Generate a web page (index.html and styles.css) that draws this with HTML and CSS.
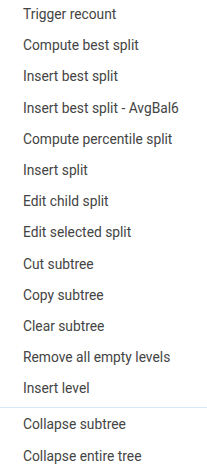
FILE: index.html
```html
<!DOCTYPE html>
<html lang="en">
<head>
  <meta charset="UTF-8">
  <title>tree menu</title>
  <link rel="stylesheet" href="styles.css">
</head>
<body>
  <ul class="menu">
    <li class="item">Trigger recount</li>
    <li class="item">Compute best split</li>
    <li class="item">Insert best split</li>
    <li class="item">Insert best split - AvgBal6</li>
    <li class="item">Compute percentile split</li>
    <li class="item">Insert split</li>
    <li class="item">Edit child split</li>
    <li class="item">Edit selected split</li>
    <li class="item">Cut subtree</li>
    <li class="item">Copy subtree</li>
    <li class="item">Clear subtree</li>
    <li class="item">Remove all empty levels</li>
    <li class="item">Insert level</li>
    <li class="sep"></li>
    <li class="item">Collapse subtree</li>
    <li class="item">Collapse entire tree</li>
  </ul>
</body>
</html>
```

FILE: styles.css
```css
body{
  margin: 0;
  background: #fff;
  font: 13.8px Roboto, "Liberation Sans", sans-serif;
  color: #444;
}
.menu{
  list-style: none;
  margin: 0;
  padding: 0;
}
.item{
  height: 31.2px;
  line-height: 28px;
  padding-left: 23px;
  white-space: nowrap;
}
.sep{
  height: 1px;
  margin: 2px 0 2px;
  background: #d6e8f8;
}
```
